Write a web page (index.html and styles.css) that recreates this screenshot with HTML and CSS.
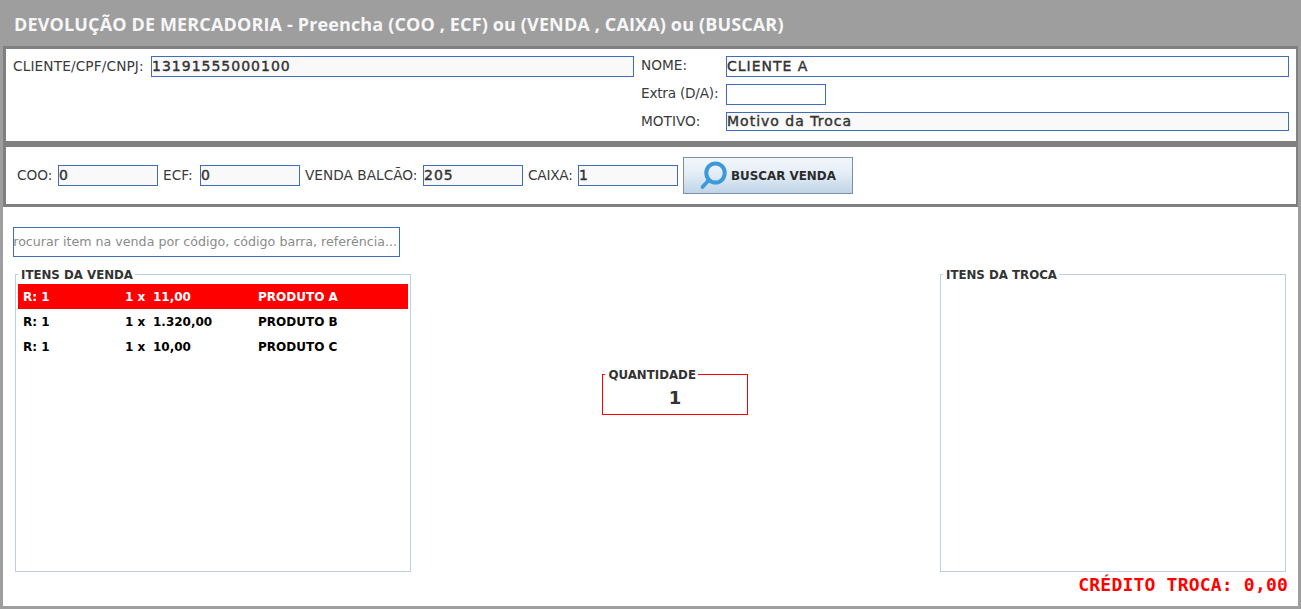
FILE: index.html
```html
<!DOCTYPE html>
<html lang="pt">
<head>
<meta charset="utf-8">
<title>Devolução de Mercadoria</title>
<link rel="stylesheet" href="styles.css">
</head>
<body>
<div class="page">
  <header class="title">DEVOLUÇÃO DE MERCADORIA - Preencha (COO , ECF) ou (VENDA , CAIXA) ou (BUSCAR)</header>

  <section class="panel client">
    <span class="label wide">CLIENTE/CPF/CNPJ:</span>
    <div class="field muted">13191555000100</div>
    <span class="label gap-left">NOME:</span>
    <div class="field">CLIENTE A</div>
    <span class="label col3 gap-left tight">Extra (D/A):</span>
    <div class="field extra"></div>
    <span class="label col3 gap-left">MOTIVO:</span>
    <div class="field muted short">Motivo da Troca</div>
  </section>

  <section class="panel sale">
    <div class="pair"><span class="label w-coo">COO:</span><div class="field muted small">0</div></div>
    <div class="pair"><span class="label w-ecf">ECF:</span><div class="field muted small">0</div></div>
    <div class="pair"><span class="label w-venda">VENDA BALCÃO:</span><div class="field muted small">205</div></div>
    <div class="pair"><span class="label w-caixa tight">CAIXA:</span><div class="field muted small">1</div></div>
    <button class="search-btn" type="button">
      <svg class="search-icon" width="32" height="32" viewBox="0 0 32 32" aria-hidden="true">
        <ellipse cx="18.5" cy="13" rx="9.2" ry="9.6" fill="none" stroke="#3c9ada" stroke-width="4"/>
        <path d="M11.5 20.5 L5.5 27" fill="none" stroke="#3c9ada" stroke-width="3.8" stroke-linecap="round"/>
      </svg>
      <span>BUSCAR VENDA</span>
    </button>
  </section>

  <section class="work">
    <div class="finder"><span>Procurar item na venda por código, código barra, referência...</span></div>
    <div class="columns">
      <fieldset class="box sale-items">
        <legend>ITENS DA VENDA</legend>
        <div class="row selected"><span class="c-ref">R: 1</span><span class="c-qty">1 x</span><span class="c-price">11,00</span><span>PRODUTO A</span></div>
        <div class="row"><span class="c-ref">R: 1</span><span class="c-qty">1 x</span><span class="c-price">1.320,00</span><span>PRODUTO B</span></div>
        <div class="row"><span class="c-ref">R: 1</span><span class="c-qty">1 x</span><span class="c-price">10,00</span><span>PRODUTO C</span></div>
      </fieldset>
      <fieldset class="box quantity">
        <legend>QUANTIDADE</legend>
        <div class="qty-value">1</div>
      </fieldset>
      <fieldset class="box swap-items">
        <legend>ITENS DA TROCA</legend>
      </fieldset>
    </div>
    <div class="credit">CRÉDITO TROCA: 0,00</div>
  </section>
</div>
</body>
</html>
```
FILE: styles.css
```css
* { box-sizing: border-box; }
html, body { margin: 0; height: 100%; }
body {
  background: #9e9e9e;
  overflow: hidden;
  font-family: "DejaVu Sans", sans-serif;
  color: #333;
}
.page { height: 609px; padding: 0 3px 3px; display: flex; flex-direction: column; }
.title {
  height: 46px;
  padding: 13px 0 0 11px;
  font: 700 18px/22px "Open Sans", sans-serif;
  letter-spacing: 0.14px;
  color: #f7f7f7;
}
.panel { background: #fff; border: 3px solid #808080; border-right-width: 2px; }
.client {
  height: 98px;
  padding: 7px 7px 0;
  display: grid;
  grid-template-columns: 138px 483px 92px 1fr;
  grid-auto-rows: min-content;
  row-gap: 7px;
}
.gap-left { margin-left: 7px; }
.col3 { grid-column: 3; }
.label { font-size: 13.7px; line-height: 19px; white-space: nowrap; color: #3a3a3a; }
.wide { letter-spacing: 0.12px; padding-top: 1px; }
.tight { letter-spacing: -0.25px; }
.field {
  height: 21px;
  border: 1px solid #3f6db8;
  background: #fff;
  font: 400 14px/19px "DejaVu Sans", sans-serif;
  letter-spacing: 1px;
  -webkit-text-stroke: 0.4px #333;
  color: #333;
  white-space: nowrap;
  overflow: hidden;
}
.muted { background: #f9f9f9; }
.extra { width: 100px; }
.short { height: 19px; line-height: 17px; }
.sale {
  height: 63px;
  padding-left: 11px;
  display: flex;
  align-items: center;
  gap: 5px;
}
.pair { display: flex; align-items: center; }
.small { width: 100px; }
.w-coo { width: 41px; }
.w-ecf { width: 37px; }
.w-venda { width: 118px; }
.w-caixa { width: 50px; }
.search-btn {
  width: 170px;
  height: 37px;
  padding: 0 0 0 47px;
  position: relative;
  text-align: left;
  border: 1px solid #7d90a8;
  background: linear-gradient(#f3f7fb, #e4edf6 45%, #bfd4e8);
  font: 700 11.9px/37px "DejaVu Sans", sans-serif;
  color: #2b2b2b;
}
.search-icon { position: absolute; left: 13px; top: 2px; }
.work { flex: 1; background: #fff; display: flex; flex-direction: column; min-height: 0; }
.finder {
  width: 387px;
  height: 30px;
  margin: 20px 0 9px 10px;
  border: 1px solid #3f6db8;
  padding: 0 2px 2px 0;
  display: flex;
  justify-content: flex-end;
  align-items: center;
  overflow: hidden;
  white-space: nowrap;
  font-size: 12.65px;
  color: #8a8a8a;
}
.finder span { flex: none; }
.columns { height: 306px; margin: 0 12px; display: flex; justify-content: space-between; }
.box {
  margin: 0;
  min-width: 0;
  padding: 2px 2px 0;
  border: 1px solid #b8cfe6;
}
.box legend {
  padding: 2px 2px 0 3px;
  font: 700 11.8px/14px "DejaVu Sans", sans-serif;
  color: #333;
}
.sale-items { width: 396px; }
.swap-items { width: 346px; }
.quantity {
  width: 146px;
  height: 49px;
  margin: 100px 0 0 -2px;
  border-color: #f00;
  padding: 0 2px;
}
.quantity legend { padding-left: 4px; }
.qty-value { margin-top: 4px; padding-left: 1px; text-align: center; font: 700 18px/24px "DejaVu Sans", sans-serif; color: #333; }
.row {
  height: 25px;
  display: flex;
  align-items: center;
  padding: 1px 0 0 5px;
  font: 700 12px/24px "DejaVu Sans", sans-serif;
  color: #000;
  white-space: nowrap;
}
.selected { background: #f00; color: #fff; }
.c-ref { width: 102px; }
.c-qty { width: 28px; }
.c-price { width: 105px; }
.credit {
  margin: 3px 10px 0 0;
  text-align: right;
  font: 700 18px/20px "DejaVu Sans Mono", monospace;
  letter-spacing: 0.2px;
  color: #f00;
}
```
